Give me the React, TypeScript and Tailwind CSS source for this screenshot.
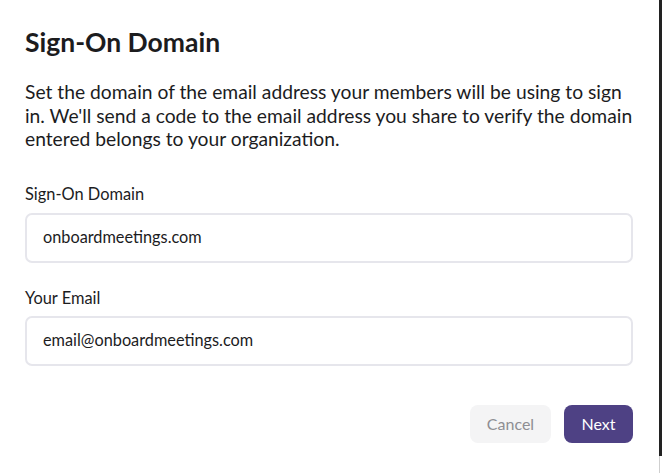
export default function App() {
  return (
    <div className="flex h-[473px] w-[662px] bg-white font-['Lato',sans-serif] text-[#1c1c1e]">
      <div className="flex flex-1 flex-col pl-[25px] pr-[26px] pt-[25px]">
        <h1 className="text-[26.5px] font-bold leading-[34px]">Sign-On Domain</h1>
        <p className="mt-[21px] text-[19.25px] leading-[23.5px]">
          Set the domain of the email address your members will be using to sign in. We'll send a code to the email
          address you share to verify the domain entered belongs to your organization.
        </p>
        <label className="mt-[33px] text-[16.4px] leading-[20px]">Sign-On Domain</label>
        <div className="mt-[9px] flex h-[50px] items-center rounded-[7px] border-2 border-[#e6e6ec] px-[16px] text-[16.3px]">
          onboardmeetings.com
        </div>
        <label className="mt-[25px] text-[16.4px] leading-[20px]">Your Email</label>
        <div className="mt-[8px] flex h-[50px] items-center rounded-[7px] border-2 border-[#e6e6ec] px-[16px] text-[16.3px]">
          email@onboardmeetings.com
        </div>
        <div className="mt-[39px] flex justify-end gap-[13px]">
          <button className="h-[38px] w-[81px] rounded-[8px] bg-[#f4f4f5] text-[16px] text-[#8e8e93]">Cancel</button>
          <button className="h-[38px] w-[69px] rounded-[8px] bg-[#4e4184] text-[16px] text-white">Next</button>
        </div>
      </div>
      <div className="flex w-[3px] flex-col">
        <div className="h-[456px] bg-[#222222]" />
        <div className="flex-1 border-l border-[#cfcfcf]" />
      </div>
    </div>
  );
}
